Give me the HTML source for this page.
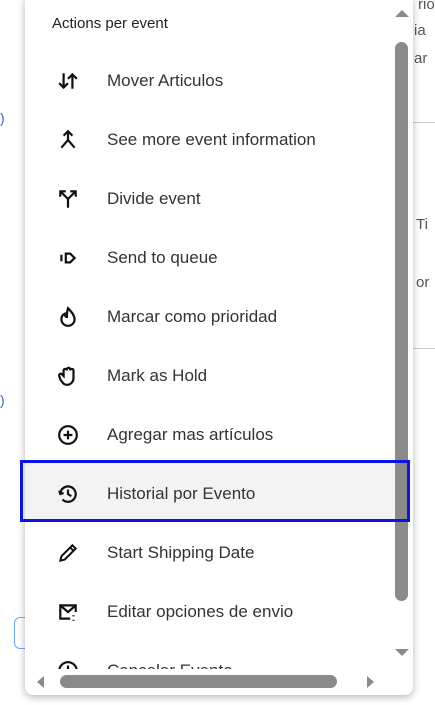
<!DOCTYPE html>
<html><head><style>
body{margin:0;width:435px;height:705px;background:#fff;position:relative;overflow:hidden;font-family:"Liberation Sans",Arial,sans-serif}
.bg{position:absolute;font-size:15px;color:#555}
.panel{position:absolute;left:25px;top:-6px;width:388px;height:701px;background:#fff;border-radius:8px;box-shadow:0 2px 8px rgba(0,0,0,.3);overflow:hidden}
.hdr{position:absolute;left:27px;top:21px;font-size:15px;color:#222}
.item{position:absolute;left:0;width:370px;height:59px;font-size:17px;color:#333}
.item span{position:absolute;left:82px;top:50%;transform:translateY(-50%);white-space:nowrap}
.item svg{position:absolute;left:32px;top:50%;transform:translateY(-50%)}
.sel{position:absolute;left:20px;top:460px;width:384px;height:56px;border:3px solid #0a14e6;z-index:5}
</style></head><body>
<div class="bg" style="left:418px;top:-4px">rio</div>
<div class="bg" style="left:414px;top:22px">ia</div>
<div class="bg" style="left:414px;top:50px">ar</div>
<div class="bg" style="left:416px;top:216px">Ti</div>
<div class="bg" style="left:416px;top:274px">or</div>
<div style="position:absolute;left:412px;top:122px;width:23px;height:1px;background:#ccc"></div>
<div style="position:absolute;left:412px;top:348px;width:23px;height:1px;background:#ccc"></div>
<div style="position:absolute;left:0;top:110px;color:#36c;font-size:14px">)</div>
<div style="position:absolute;left:0;top:392px;color:#36c;font-size:14px">)</div>
<div style="position:absolute;left:14px;top:617px;width:14px;height:30px;border:1px solid #6af;border-right:none;border-radius:6px 0 0 6px"></div>
<div class="sel"></div>
<div class="panel">
<div style="position:absolute;left:0;top:469px;width:370px;height:56px;background:#f3f3f3"></div>
<div class="hdr">Actions per event</div>
<div class="item" style="top:57px"><svg width="22" height="22" viewBox="0 0 20 20" fill="none" stroke="#111" stroke-width="2"><path d="M6 3v13M2 12l4 4 4-4M14 17V4M10 8l4-4 4 4"/></svg><span>Mover Articulos</span></div>
<div class="item" style="top:116px"><svg width="22" height="22" viewBox="0 0 20 20" fill="none" stroke="#111" stroke-width="2"><path d="M10 3v7L4 17M10 10l6 7M6 6l4-4 4 4"/></svg><span>See more event information</span></div>
<div class="item" style="top:175px"><svg width="22" height="22" viewBox="0 0 20 20" fill="none" stroke="#111" stroke-width="2"><path d="M10 18v-8L4 4M10 10l6-6M3 8V3h5M12 3h5v5"/></svg><span>Divide event</span></div>
<div class="item" style="top:234px"><svg width="22" height="22" viewBox="0 0 20 20" fill="none" stroke="#111" stroke-width="2"><path d="M4 7v6M8 6h4l4 4-4 4H8z"/></svg><span>Send to queue</span></div>
<div class="item" style="top:293px"><svg width="22" height="22" viewBox="0 0 20 20" fill="none" stroke="#111" stroke-width="2"><path d="M10 2c4 4 6 7 6 10a6 6 0 0 1-12 0c0-2 1-4 3-5 0 2 1 3 2 3 0-3 0-5 1-8z"/></svg><span>Marcar como prioridad</span></div>
<div class="item" style="top:352px"><svg width="22" height="22" viewBox="0 0 20 20" fill="none" stroke="#111" stroke-width="2"><path d="M6 10V5a1.5 1.5 0 0 1 3 0V4a1.5 1.5 0 0 1 3 0v1a1.5 1.5 0 0 1 3 0v7a6 6 0 0 1-6 6c-3 0-4-2-6-5l-1-3a1.5 1.5 0 0 1 3-1z"/></svg><span>Mark as Hold</span></div>
<div class="item" style="top:411px"><svg width="22" height="22" viewBox="0 0 20 20" fill="none" stroke="#111" stroke-width="2"><circle cx="10" cy="10" r="8"/><path d="M10 6v8M6 10h8"/></svg><span>Agregar mas artículos</span></div>
<div class="item" style="top:470px"><svg width="22" height="22" viewBox="0 0 20 20" fill="none" stroke="#111" stroke-width="2"><path d="M3 10a7 7 0 1 1 2 5M2 7l1 3 3-1M10 6v4l3 2"/></svg><span>Historial por Evento</span></div>
<div class="item" style="top:529px"><svg width="22" height="22" viewBox="0 0 20 20" fill="none" stroke="#111" stroke-width="1.8"><path d="M3 17l1-4L14 3l3 3L7 16zM12 5l3 3"/></svg><span>Start Shipping Date</span></div>
<div class="item" style="top:588px"><svg width="22" height="22" viewBox="0 0 20 20" fill="none" stroke="#111" stroke-width="2"><path d="M12 16H3V4h14v6M3 4l7 6 7-6M15 13v1M15 17v1"/></svg><span>Editar opciones de envio</span></div>
<div class="item" style="top:647px"><svg width="22" height="22" viewBox="0 0 20 20" fill="none" stroke="#111" stroke-width="2"><circle cx="10" cy="10" r="8"/><path d="M10 5v6"/></svg><span>Cancelar Evento</span></div>
<div style="position:absolute;left:0;top:675px;width:388px;height:28px;background:#fff"></div>
<div style="position:absolute;left:35px;top:681px;width:277px;height:13px;border-radius:7px;background:#8a8a8a"></div>
<div style="position:absolute;left:12px;top:682px;width:0;height:0;border-top:6px solid transparent;border-bottom:6px solid transparent;border-right:7px solid #8a8a8a"></div>
<div style="position:absolute;left:342px;top:682px;width:0;height:0;border-top:6px solid transparent;border-bottom:6px solid transparent;border-left:7px solid #8a8a8a"></div>
<div style="position:absolute;left:370px;top:48px;width:13px;height:559px;border-radius:7px;background:#8a8a8a"></div>
<div style="position:absolute;left:370px;top:16px;width:0;height:0;border-left:7px solid transparent;border-right:7px solid transparent;border-bottom:7px solid #8a8a8a"></div>
<div style="position:absolute;left:370px;top:655px;width:0;height:0;border-left:7px solid transparent;border-right:7px solid transparent;border-top:7px solid #8a8a8a"></div>
</div>
</body></html>
